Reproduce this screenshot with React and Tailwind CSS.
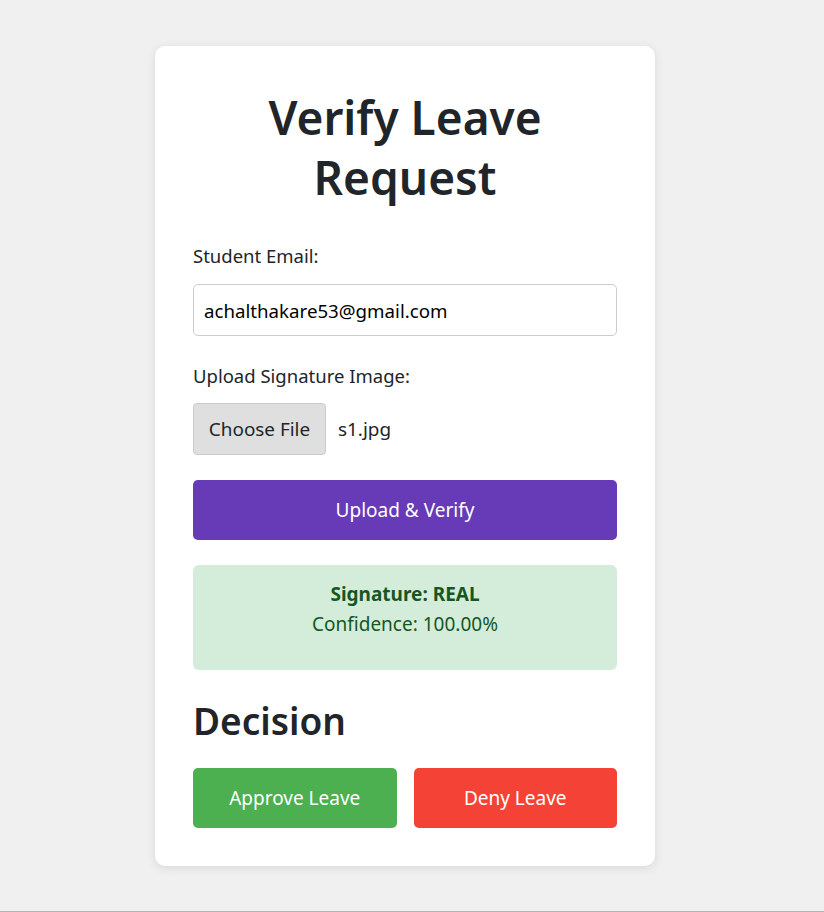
export default function App() {
  return (
    <div className="min-h-screen border-b border-[#b8b0aa] bg-[#f0f0f0] pt-[46px] font-['Noto_Sans',sans-serif] text-[#212529]">
      <div className="ml-[155px] w-[500px] rounded-[10px] bg-white px-[38px] pt-[41px] pb-[38px] shadow-[0_2px_10px_rgba(0,0,0,0.1)]">
        <h1 className="text-center text-[46px] leading-[60px] font-semibold">
          Verify Leave
          <br />
          Request
        </h1>

        <label className="mt-[37px] block text-[18.5px] leading-[24px]">Student Email:</label>
        <input
          type="email"
          defaultValue="achalthakare53@gmail.com"
          className="mt-[16px] block h-[52px] w-full rounded-[5px] border border-[#ccc] px-[10px] text-[18.7px] text-black outline-none"
        />

        <label className="mt-[28px] block text-[18.5px] leading-[24px]">Upload Signature Image:</label>
        <div className="mt-[15px] flex items-center gap-[12px]">
          <span className="flex h-[52px] w-[133px] items-center justify-center rounded-[4px] border border-[#ccc] bg-[#dfdfdf] text-[18.9px]">
            Choose File
          </span>
          <span className="text-[18.9px]">s1.jpg</span>
        </div>

        <button className="mt-[25px] block h-[60px] w-full rounded-[5px] bg-[#673ab7] text-[19px] text-white">
          Upload &amp; Verify
        </button>

        <div className="mt-[25px] rounded-[6px] bg-[#d4edda] pt-[14px] pb-[31px] text-center text-[19px] leading-[30px] text-[#155724]">
          <p className="font-bold">Signature: REAL</p>
          <p>Confidence: 100.00%</p>
        </div>

        <h2 className="mt-[27px] text-[37px] leading-[48px] font-semibold">Decision</h2>

        <div className="mt-[23px] grid grid-cols-2 gap-[17px]">
          <button className="h-[60px] rounded-[5px] bg-[#4caf50] text-[19px] text-white">Approve Leave</button>
          <button className="h-[60px] rounded-[5px] bg-[#f44336] text-[19px] text-white">Deny Leave</button>
        </div>
      </div>
    </div>
  );
}
